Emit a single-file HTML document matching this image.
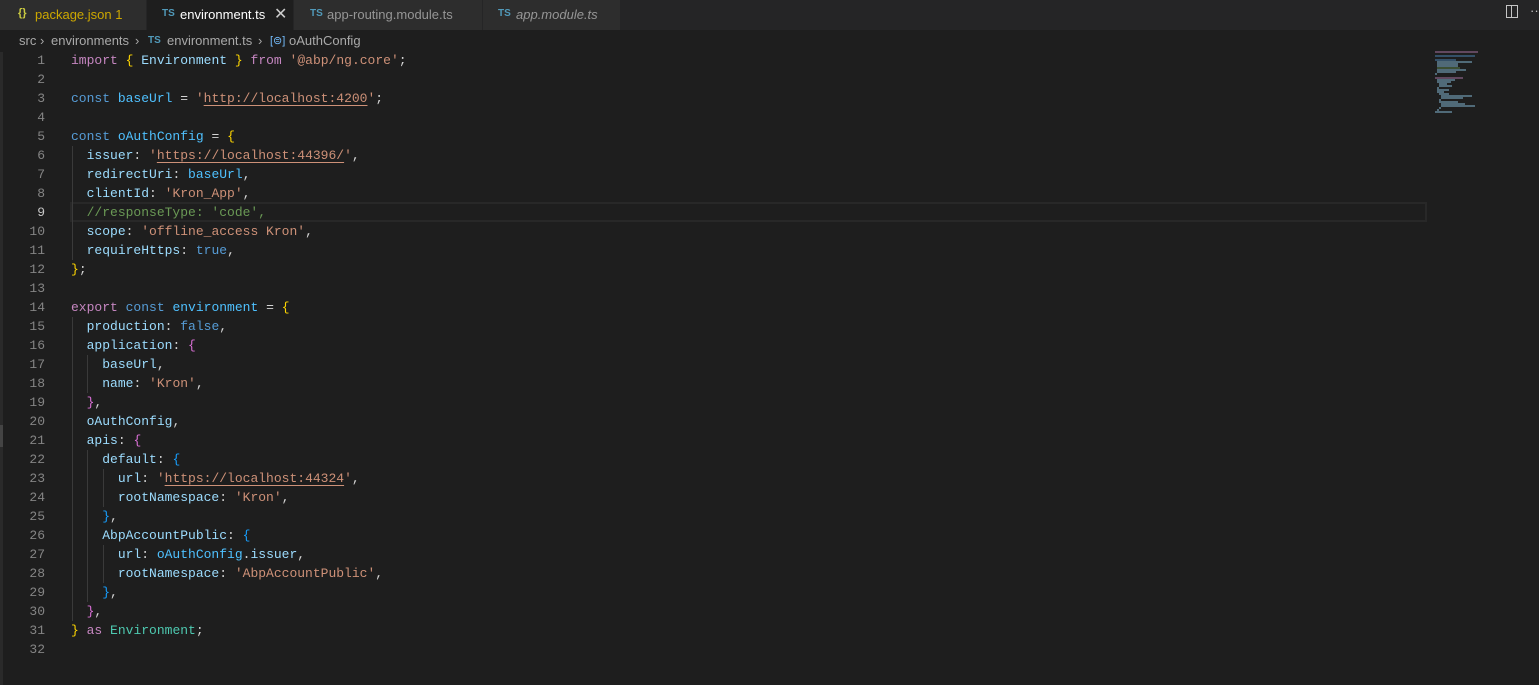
<!DOCTYPE html>
<html><head><meta charset="utf-8"><style>
*{margin:0;padding:0;box-sizing:border-box}
body{width:1539px;height:685px;background:#1e1e1e;position:relative;overflow:hidden;font-family:"Liberation Sans",sans-serif}
#tabs{position:absolute;left:0;top:0;width:1539px;height:30px;background:#252526}
.tab{position:absolute;top:0;height:30px;background:#2d2d2d;border-right:1px solid #252526;font-size:13px;line-height:29px;color:#969696;white-space:nowrap}
.tab.active{background:#1e1e1e;color:#fff}
.ts{position:absolute;color:#519aba;font-size:10px;font-weight:bold;top:-1px;line-height:29px}
#bc{position:absolute;top:30px;left:0;height:22px;width:1539px;font-size:13px;line-height:22px;color:#a9a9a9}
#bc span{position:absolute;top:0}
.ln{position:absolute;left:0;width:45px;text-align:right;color:#858585;font-family:"Liberation Mono",monospace;font-size:13px;height:19px;line-height:19px}
.cl{position:absolute;left:71px;white-space:pre;font-family:"Liberation Mono",monospace;font-size:13px;height:19px;line-height:19px;color:#d4d4d4}
.k{color:#569cd6}.i{color:#c586c0}.v{color:#9cdcfe}.s{color:#ce9178}.t{color:#4ec9b0}.y{color:#ffd700}.p{color:#da70d6}.b{color:#179fff}.c{color:#6a9955}.f{color:#4fc1ff}
.u{text-decoration:underline;text-decoration-color:#ce9178;text-underline-offset:3px}
.g{position:absolute;width:1px;background:#3a3a3a}
#mm div{position:absolute;height:2px}
</style></head><body>
<div id="tabs">
 <div class="tab" style="left:0;width:147px;color:#cca700"><span style="position:absolute;left:18px;color:#cbcb41;font-weight:bold;font-size:11px;top:-1px">{}</span><span style="position:absolute;left:35px">package.json 1</span></div>
 <div class="tab active" style="left:147px;width:147px"><span class="ts" style="left:15px">TS</span><span style="position:absolute;left:33px">environment.ts</span><span style="position:absolute;left:127px;font-size:16px;color:#ccc">✕</span></div>
 <div class="tab" style="left:294px;width:189px"><span class="ts" style="left:16px">TS</span><span style="position:absolute;left:33px">app-routing.module.ts</span></div>
 <div class="tab" style="left:483px;width:138px"><span class="ts" style="left:15px">TS</span><span style="position:absolute;left:33px;font-style:italic">app.module.ts</span></div>
 <div style="position:absolute;left:1506px;top:5px;width:12px;height:13px;border:1px solid #c5c5c5"></div>
 <div style="position:absolute;left:1511px;top:5px;width:1px;height:13px;background:#c5c5c5"></div>
 <div style="position:absolute;left:1530px;top:3px;color:#c5c5c5;font-size:13px">···</div>
</div>
<div id="bc">
 <span style="left:19px">src</span><span style="left:40px">›</span><span style="left:51px">environments</span><span style="left:135px">›</span>
 <span style="left:148px;color:#519aba;font-size:10px;font-weight:bold;top:0">TS</span><span style="left:167px">environment.ts</span><span style="left:258px">›</span>
 <span style="left:270px;color:#75beff;font-size:11px">[⊜]</span><span style="left:289px">oAuthConfig</span>
</div>
<div style="position:absolute;left:0;top:52px;width:3px;height:633px;background:#2a2a2a"></div>
<div style="position:absolute;left:0;top:425px;width:3px;height:22px;background:#444"></div>
<div style="position:absolute;left:70px;top:202px;width:1357px;height:20px;border:2px solid #282828"></div>

<div class="g" style="left:72px;top:146px;height:114px"></div>
<div class="g" style="left:72px;top:317px;height:304px"></div>
<div class="g" style="left:87px;top:355px;height:38px"></div>
<div class="g" style="left:87px;top:450px;height:152px"></div>
<div class="g" style="left:103px;top:469px;height:38px"></div>
<div class="g" style="left:103px;top:545px;height:38px"></div>

<div id="code"></div>
<div id="mm"></div>
<script>
(function(){
var L=[
'<span class="i">import</span> <span class="y">{</span> <span class="v">Environment</span> <span class="y">}</span> <span class="i">from</span> <span class="s">\'@abp/ng.core\'</span>;',
'',
'<span class="k">const</span> <span class="f">baseUrl</span> = <span class="s">\'<span class="u">http://localhost:4200</span>\'</span>;',
'',
'<span class="k">const</span> <span class="f">oAuthConfig</span> = <span class="y">{</span>',
'  <span class="v">issuer</span>: <span class="s">\'<span class="u">https://localhost:44396/</span>\'</span>,',
'  <span class="v">redirectUri</span>: <span class="f">baseUrl</span>,',
'  <span class="v">clientId</span>: <span class="s">\'Kron_App\'</span>,',
'  <span class="c">//responseType: \'code\',</span>',
'  <span class="v">scope</span>: <span class="s">\'offline_access Kron\'</span>,',
'  <span class="v">requireHttps</span>: <span class="k">true</span>,',
'<span class="y">}</span>;',
'',
'<span class="i">export</span> <span class="k">const</span> <span class="f">environment</span> = <span class="y">{</span>',
'  <span class="v">production</span>: <span class="k">false</span>,',
'  <span class="v">application</span>: <span class="p">{</span>',
'    <span class="v">baseUrl</span>,',
'    <span class="v">name</span>: <span class="s">\'Kron\'</span>,',
'  <span class="p">}</span>,',
'  <span class="v">oAuthConfig</span>,',
'  <span class="v">apis</span>: <span class="p">{</span>',
'    <span class="v">default</span>: <span class="b">{</span>',
'      <span class="v">url</span>: <span class="s">\'<span class="u">https://localhost:44324</span>\'</span>,',
'      <span class="v">rootNamespace</span>: <span class="s">\'Kron\'</span>,',
'    <span class="b">}</span>,',
'    <span class="v">AbpAccountPublic</span>: <span class="b">{</span>',
'      <span class="v">url</span>: <span class="f">oAuthConfig</span>.<span class="v">issuer</span>,',
'      <span class="v">rootNamespace</span>: <span class="s">\'AbpAccountPublic\'</span>,',
'    <span class="b">}</span>,',
'  <span class="p">}</span>,',
'<span class="y">}</span> <span class="i">as</span> <span class="t">Environment</span>;',
''];
var h='',m='';
var col={k:'#569cd6',i:'#c586c0',v:'#9cdcfe',s:'#ce9178',t:'#4ec9b0',c:'#6a9955',f:'#4fc1ff'};
for(var n=0;n<L.length;n++){
 var yy=51+n*19;
 h+='<div class="ln" style="top:'+yy+'px;'+(n==8?'color:#c6c6c6':'')+'">'+(n+1)+'</div>';
 h+='<div class="cl" style="top:'+yy+'px">'+L[n]+'</div>';
 var txt=L[n].replace(/<[^>]+>/g,'');
 if(txt.trim()){
  var ind=txt.length-txt.replace(/^ +/,'').length;
  var c='#9cdcfe';var mt=L[n].match(/class="(\w)"/);if(mt&&col[mt[1]])c=col[mt[1]];
  m+='<div style="left:'+(1435+ind)+'px;top:'+(51+n*2)+'px;width:'+(txt.length-ind)+'px;background:'+c+';opacity:.4"></div>';
 }
}
document.getElementById('code').innerHTML=h;
document.getElementById('mm').innerHTML=m;
})();
</script>
</body></html>
